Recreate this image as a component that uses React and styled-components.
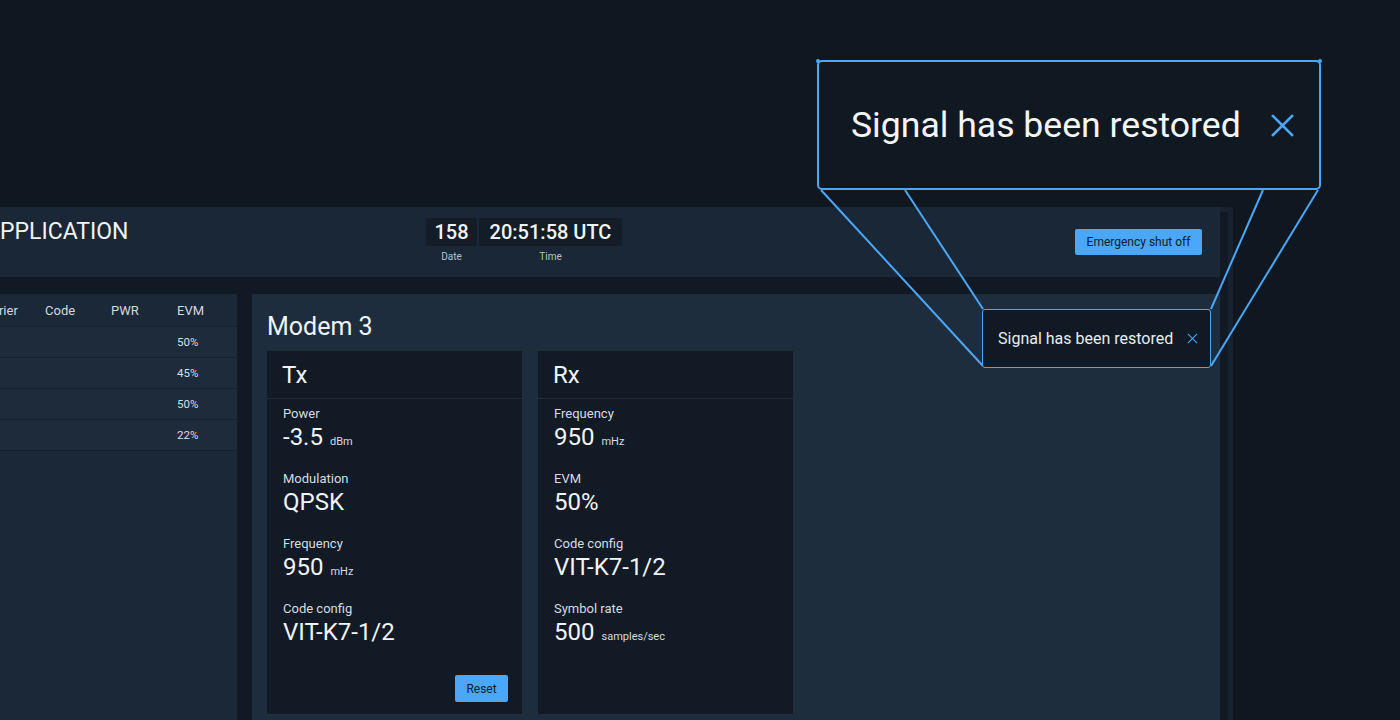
import React from 'react'
import styled, { createGlobalStyle } from 'styled-components'

const accent = '#4ba7fa'

const GlobalStyle = createGlobalStyle`
  html, body {
    margin: 0;
    padding: 0;
    background: #0f1821;
    overflow: hidden;
  }
  body {
    font-family: Roboto, 'Noto Sans', sans-serif;
    color: #e8edf2;
  }
`

const Page = styled.div`
  position: relative;
  width: 1400px;
  height: 720px;
  overflow: hidden;
  padding-top: 207px;
  box-sizing: border-box;
`

const Frame = styled.div`
  display: flex;
  width: 1333px;
  height: 513px;
  margin-left: -100px;
  padding-right: 5px;
  box-sizing: border-box;
  background: #172230;
`

const MainCol = styled.div`
  flex: 1;
  display: flex;
  flex-direction: column;
  min-width: 0;
`

const ScrollTrack = styled.div`
  width: 8px;
  margin-top: 5px;
  background: #111a24;
`

const Header = styled.header`
  height: 70px;
  flex: none;
  display: flex;
  align-items: flex-start;
  background: #1a2736;
`

const AppTitle = styled.h1`
  width: 526px;
  box-sizing: border-box;
  margin: 11px 0 0;
  padding-left: 85px;
  font-size: 23px;
  line-height: 28px;
  font-weight: 400;
  color: #f1f4f7;
`

const Clock = styled.div`
  display: flex;
  gap: 2px;
  margin-top: 11px;
`

const ClockCell = styled.div`
  display: flex;
  flex-direction: column;
  align-items: center;
`

const ClockValue = styled.div`
  width: ${p => p.$w}px;
  height: 28px;
  line-height: 28px;
  text-align: center;
  font-size: 20px;
  font-weight: 500;
  background: #131d28;
  color: #f1f4f7;
`

const ClockLabel = styled.div`
  margin-top: 5px;
  font-size: 10px;
  color: #b8c1cb;
`

const Spacer = styled.div`
  flex: 1;
`

const Button = styled.button`
  flex: none;
  border: none;
  border-radius: 2px;
  background: ${accent};
  color: #0e1c2b;
  font-family: Roboto, sans-serif;
  font-size: 12px;
  padding: 0;
  width: ${p => p.$w}px;
  height: ${p => p.$h}px;
`

const HeaderButton = styled(Button)`
  margin-top: 22px;
  margin-right: 18px;
`

const Body = styled.div`
  flex: 1;
  display: flex;
  gap: 15px;
  padding-top: 17px;
  background: #111a24;
  min-height: 0;
`

const LeftPanel = styled.section`
  width: 337px;
  flex: none;
  background: #1b2838;
`

const TableRow = styled.div`
  display: grid;
  grid-template-columns: repeat(5, 66px);
  align-items: center;
  padding-left: 13px;
  height: ${p => (p.$head ? 32 : 30)}px;
  background: ${p => (p.$head ? '#1b2838' : '#1d2b3b')};
  border-bottom: 1px solid #16212c;
  font-size: ${p => (p.$head ? 13 : 11.5)}px;
  color: ${p => (p.$head ? '#d3d9df' : '#d9dfe5')};
`

const MainPanel = styled.section`
  flex: 1;
  background: #1e2d3e;
  padding: 18px 0 0 15px;
`

const PanelTitle = styled.h2`
  margin: 0;
  font-size: 25px;
  line-height: 30px;
  font-weight: 400;
  color: #f1f4f7;
`

const Cards = styled.div`
  display: flex;
  gap: 16px;
  margin-top: 9px;
`

const Card = styled.div`
  width: 255px;
  height: 363px;
  display: flex;
  flex-direction: column;
  background: #111a25;
`

const CardHead = styled.div`
  flex: none;
  height: 47px;
  display: flex;
  align-items: center;
  padding-left: 15px;
  border-bottom: 1px solid #1f2c3a;
  font-size: 24px;
  color: #f1f4f7;
`

const CardBody = styled.div`
  padding: 7px 15px 0 16px;
`

const Field = styled.div`
  margin-bottom: 20px;
`

const Label = styled.div`
  font-size: 13px;
  line-height: 16px;
  color: #d6dce2;
`

const Value = styled.div`
  margin-top: 1px;
  font-size: 24px;
  line-height: 28px;
  color: #f1f4f7;
`

const Unit = styled.span`
  margin-left: 7px;
  font-size: 11px;
  line-height: 1;
  color: #d6dce2;
`

const ResetButton = styled(Button)`
  margin: auto 14px 12px auto;
`

const Toast = styled.div`
  position: absolute;
  left: 982px;
  top: 309px;
  width: 229px;
  height: 59px;
  box-sizing: border-box;
  display: flex;
  align-items: center;
  justify-content: space-between;
  padding: 0 12px 0 15px;
  border: 1px solid ${accent};
  border-radius: 3px;
  background: #111a24;
  font-size: 16px;
  color: #e8edf2;
`

const Callout = styled.div`
  position: absolute;
  left: 817px;
  top: 60px;
  width: 504px;
  height: 130px;
  box-sizing: border-box;
  display: flex;
  align-items: center;
  justify-content: space-between;
  padding: 0 24px 0 32px;
  border: 2px solid ${accent};
  border-radius: 5px;
  background: #101922;
  font-size: 35.6px;
  color: #f4f6f8;
  &::before,
  &::after {
    content: '';
    position: absolute;
    top: -3px;
    width: 4px;
    height: 4px;
    border-radius: 50%;
    background: ${accent};
  }
  &::before { left: -3px; }
  &::after { right: -3px; }
`

const Lines = styled.svg`
  position: absolute;
  left: 0;
  top: 0;
  pointer-events: none;
`

const Close = ({ size, stroke }) => (
  <svg width={size} height={size} viewBox='0 0 24 24'>
    <path d='M2 2 L22 22 M22 2 L2 22' stroke={accent} strokeWidth={stroke} fill='none' />
  </svg>
)

const rows = ['50%', '45%', '50%', '22%']

const txFields = [
  { label: 'Power', value: '-3.5', unit: 'dBm' },
  { label: 'Modulation', value: 'QPSK' },
  { label: 'Frequency', value: '950', unit: 'mHz' },
  { label: 'Code config', value: 'VIT-K7-1/2' }
]

const rxFields = [
  { label: 'Frequency', value: '950', unit: 'mHz' },
  { label: 'EVM', value: '50%' },
  { label: 'Code config', value: 'VIT-K7-1/2' },
  { label: 'Symbol rate', value: '500', unit: 'samples/sec' }
]

const Fields = ({ items }) => (
  <CardBody>
    {items.map(f => (
      <Field key={f.label}>
        <Label>{f.label}</Label>
        <Value>
          {f.value}
          {f.unit && <Unit>{f.unit}</Unit>}
        </Value>
      </Field>
    ))}
  </CardBody>
)

export default function App () {
  return (
    <Page>
      <GlobalStyle />
      <Frame>
        <MainCol>
          <Header>
            <AppTitle>APPLICATION</AppTitle>
            <Clock>
              <ClockCell>
                <ClockValue $w={51}>158</ClockValue>
                <ClockLabel>Date</ClockLabel>
              </ClockCell>
              <ClockCell>
                <ClockValue $w={143}>20:51:58 UTC</ClockValue>
                <ClockLabel>Time</ClockLabel>
              </ClockCell>
            </Clock>
            <Spacer />
            <HeaderButton $w={127} $h={26}>Emergency shut off</HeaderButton>
          </Header>
          <Body>
            <LeftPanel>
              <TableRow $head>
                <span>Modem</span>
                <span>Carrier</span>
                <span>Code</span>
                <span>PWR</span>
                <span>EVM</span>
              </TableRow>
              {rows.map((evm, i) => (
                <TableRow key={i}>
                  <span />
                  <span />
                  <span />
                  <span />
                  <span>{evm}</span>
                </TableRow>
              ))}
            </LeftPanel>
            <MainPanel>
              <PanelTitle>Modem 3</PanelTitle>
              <Cards>
                <Card>
                  <CardHead>Tx</CardHead>
                  <Fields items={txFields} />
                  <ResetButton $w={53} $h={27}>Reset</ResetButton>
                </Card>
                <Card>
                  <CardHead>Rx</CardHead>
                  <Fields items={rxFields} />
                </Card>
              </Cards>
            </MainPanel>
          </Body>
        </MainCol>
        <ScrollTrack />
      </Frame>

      <Lines width='1400' height='720'>
        <g stroke={accent} strokeWidth='2' fill='none'>
          <line x1='821' y1='190' x2='983' y2='366' />
          <line x1='905' y1='190' x2='983' y2='309' />
          <line x1='1263' y1='190' x2='1211' y2='309' />
          <line x1='1318' y1='190' x2='1211' y2='366' />
        </g>
      </Lines>

      <Toast>
        <span>Signal has been restored</span>
        <Close size={11} stroke={2.4} />
      </Toast>

      <Callout>
        <span>Signal has been restored</span>
        <Close size={25} stroke={2.6} />
      </Callout>
    </Page>
  )
}
